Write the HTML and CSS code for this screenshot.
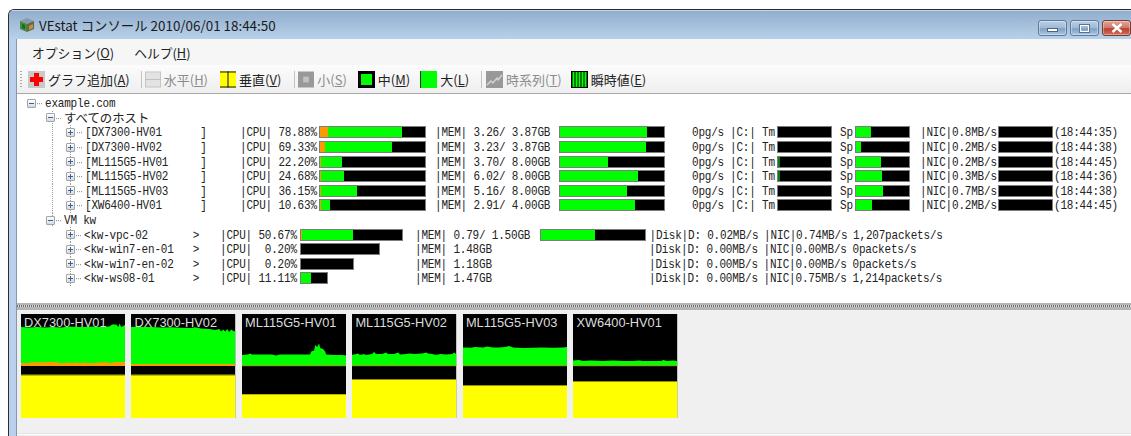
FILE: index.html
```html
<!DOCTYPE html>
<html lang="ja">
<head>
<meta charset="utf-8">
<title>VEstat コンソール</title>
<link rel="stylesheet" href="styles.css">
</head>
<body>
<div class="window">
  <header class="titlebar">
    <svg class="app-icon" viewBox="0 0 16 16" width="16" height="16">
      <polygon points="8,1 15,4 8,7 1,4" fill="#8a9aa8"/>
      <polygon points="1,4 8,7 8,15 1,12" fill="#3f8f3a"/>
      <polygon points="8,7 15,4 15,12 8,15" fill="#5a6a55"/>
      <polygon points="10,9 14,7 14,11 10,13" fill="#d98a20"/>
      <polygon points="3,7 6,8 6,12 3,11" fill="#2c5f28"/>
    </svg>
    <span class="title-text">VEstat コンソール 2010/06/01 18:44:50</span>
    <div class="caption-buttons">
      <div class="cap-btn"><span class="glyph-min"></span></div>
      <div class="cap-btn"><span class="glyph-max"></span></div>
      <div class="cap-btn cap-close">
        <svg viewBox="0 0 12 10" width="12" height="10"><path d="M1.5 1 L10.5 9 M10.5 1 L1.5 9" stroke="#fff" stroke-width="2.4" fill="none"/></svg>
      </div>
    </div>
  </header>

  <div class="client">
    <nav class="menubar">
      <span class="menu-item">オプション(<u>O</u>)</span>
      <span class="menu-item">ヘルプ(<u>H</u>)</span>
    </nav>

    <div class="toolbar">
      <span class="grip"></span>
      <span class="tool tool-add">
        <svg class="ticon" viewBox="0 0 17 17" width="17" height="17"><rect width="17" height="17" fill="#c9c9c9"/><path d="M6 2h5v4h4v5h-4v4H6v-4H2V6h4z" fill="#f00"/></svg>
        <span>グラフ追加(<u>A</u>)</span>
      </span>
      <span class="sep sep-1"></span>
      <span class="tool off tool-h">
        <svg class="ticon" viewBox="0 0 17 17" width="16" height="17"><rect x=".5" y=".5" width="16" height="16" fill="#e3e3e3" stroke="#c4c4c4"/><path d="M0 8.5h17" stroke="#bdbdbd"/></svg>
        <span>水平(<u>H</u>)</span>
      </span>
      <span class="tool tool-v">
        <svg class="ticon" viewBox="0 0 17 17" width="16" height="17"><rect width="17" height="17" fill="#ff0"/><path d="M0 .5h17M0 16.5h17M8.5 0v17" stroke="#000"/></svg>
        <span>垂直(<u>V</u>)</span>
      </span>
      <span class="sep sep-2"></span>
      <span class="tool off tool-s">
        <svg class="ticon" viewBox="0 0 17 17" width="16" height="17"><rect width="17" height="17" fill="#999"/><rect x="5.5" y="5.5" width="6" height="6" fill="#c2c2c2"/></svg>
        <span>小(<u>S</u>)</span>
      </span>
      <span class="tool tool-m">
        <svg class="ticon" viewBox="0 0 17 17" width="17" height="17"><rect width="17" height="17" fill="#000"/><rect x="3" y="3" width="11" height="11" fill="#0f0"/></svg>
        <span>中(<u>M</u>)</span>
      </span>
      <span class="tool tool-l">
        <svg class="ticon" viewBox="0 0 17 17" width="17" height="17"><rect width="17" height="17" fill="#0f0"/><path d="M.5 0v17" stroke="#333"/></svg>
        <span>大(<u>L</u>)</span>
      </span>
      <span class="sep sep-3"></span>
      <span class="tool off tool-t">
        <svg class="ticon" viewBox="0 0 17 17" width="17" height="17"><rect width="17" height="17" fill="#999"/><path d="M1 14l4-4 2 2 4-5 1 2 4-5" stroke="#d5d5d5" stroke-width="1.4" fill="none"/></svg>
        <span>時系列(<u>T</u>)</span>
      </span>
      <span class="tool tool-e">
        <svg class="ticon" viewBox="0 0 17 17" width="17" height="17"><rect width="17" height="17" fill="#000"/><path d="M2.5 1v15M5.5 1v15M8.5 1v15M11.5 1v15M14.5 1v15" stroke="#0f0" stroke-width="2"/></svg>
        <span>瞬時値(<u>E</u>)</span>
      </span>
    </div>

    <div class="tree">
      <div class="node level-0"><span class="toggle minus"></span><span class="node-text latin">example.com</span></div>
      <div class="node level-1 guide-root"><span class="toggle minus"></span><span class="node-text">すべてのホスト</span></div>

      <div class="row host guide-group guide-child">
        <span class="toggle plus"></span><span class="c name">[DX7300-HV01      ]</span>
        <span class="c h-cpu">|CPU| 78.88%</span>
        <span class="bar bar-107"><i class="warn" style="width:8px"></i><i class="fill" style="width:74px"></i></span>
        <span class="c h-mem">|MEM| 3.26/ 3.87GB</span>
        <span class="bar bar-106"><i class="fill" style="width:87px"></i></span>
        <span class="c h-pg">0pg/s</span><span class="c h-c">|C:|</span><span class="c h-tm">Tm</span>
        <span class="bar bar-55"></span>
        <span class="c h-sp">Sp</span>
        <span class="bar bar-55"><i class="fill" style="width:15px"></i></span>
        <span class="c h-nic">|NIC|0.8MB/s</span>
        <span class="bar bar-55"></span>
        <span class="c h-time">(18:44:35)</span>
      </div>
      <div class="row host guide-group guide-child">
        <span class="toggle plus"></span><span class="c name">[DX7300-HV02      ]</span>
        <span class="c h-cpu">|CPU| 69.33%</span>
        <span class="bar bar-107"><i class="warn" style="width:5px"></i><i class="fill" style="width:67px"></i></span>
        <span class="c h-mem">|MEM| 3.23/ 3.87GB</span>
        <span class="bar bar-106"><i class="fill" style="width:86px"></i></span>
        <span class="c h-pg">0pg/s</span><span class="c h-c">|C:|</span><span class="c h-tm">Tm</span>
        <span class="bar bar-55"></span>
        <span class="c h-sp">Sp</span>
        <span class="bar bar-55"><i class="fill" style="width:5px"></i></span>
        <span class="c h-nic">|NIC|0.2MB/s</span>
        <span class="bar bar-55"></span>
        <span class="c h-time">(18:44:38)</span>
      </div>
      <div class="row host guide-group guide-child">
        <span class="toggle plus"></span><span class="c name">[ML115G5-HV01     ]</span>
        <span class="c h-cpu">|CPU| 22.20%</span>
        <span class="bar bar-107"><i class="warn" style="width:1px"></i><i class="fill" style="width:21px"></i></span>
        <span class="c h-mem">|MEM| 3.70/ 8.00GB</span>
        <span class="bar bar-106"><i class="fill" style="width:48px"></i></span>
        <span class="c h-pg">0pg/s</span><span class="c h-c">|C:|</span><span class="c h-tm">Tm</span>
        <span class="bar bar-55"><i class="fill dim" style="width:2px"></i></span>
        <span class="c h-sp">Sp</span>
        <span class="bar bar-55"><i class="fill" style="width:25px"></i></span>
        <span class="c h-nic">|NIC|0.2MB/s</span>
        <span class="bar bar-55"></span>
        <span class="c h-time">(18:44:45)</span>
      </div>
      <div class="row host guide-group guide-child">
        <span class="toggle plus"></span><span class="c name">[ML115G5-HV02     ]</span>
        <span class="c h-cpu">|CPU| 24.68%</span>
        <span class="bar bar-107"><i class="warn" style="width:1px"></i><i class="fill" style="width:23px"></i></span>
        <span class="c h-mem">|MEM| 6.02/ 8.00GB</span>
        <span class="bar bar-106"><i class="fill" style="width:78px"></i></span>
        <span class="c h-pg">0pg/s</span><span class="c h-c">|C:|</span><span class="c h-tm">Tm</span>
        <span class="bar bar-55"><i class="fill dim" style="width:2px"></i></span>
        <span class="c h-sp">Sp</span>
        <span class="bar bar-55"><i class="fill" style="width:26px"></i></span>
        <span class="c h-nic">|NIC|0.3MB/s</span>
        <span class="bar bar-55"></span>
        <span class="c h-time">(18:44:36)</span>
      </div>
      <div class="row host guide-group guide-child">
        <span class="toggle plus"></span><span class="c name">[ML115G5-HV03     ]</span>
        <span class="c h-cpu">|CPU| 36.15%</span>
        <span class="bar bar-107"><i class="warn" style="width:1px"></i><i class="fill" style="width:36px"></i></span>
        <span class="c h-mem">|MEM| 5.16/ 8.00GB</span>
        <span class="bar bar-106"><i class="fill" style="width:67px"></i></span>
        <span class="c h-pg">0pg/s</span><span class="c h-c">|C:|</span><span class="c h-tm">Tm</span>
        <span class="bar bar-55"></span>
        <span class="c h-sp">Sp</span>
        <span class="bar bar-55"><i class="fill" style="width:27px"></i></span>
        <span class="c h-nic">|NIC|0.7MB/s</span>
        <span class="bar bar-55"></span>
        <span class="c h-time">(18:44:38)</span>
      </div>
      <div class="row host guide-group guide-child">
        <span class="toggle plus"></span><span class="c name">[XW6400-HV01      ]</span>
        <span class="c h-cpu">|CPU| 10.63%</span>
        <span class="bar bar-107"><i class="warn" style="width:1px"></i><i class="fill" style="width:9px"></i></span>
        <span class="c h-mem">|MEM| 2.91/ 4.00GB</span>
        <span class="bar bar-106"><i class="fill" style="width:75px"></i></span>
        <span class="c h-pg">0pg/s</span><span class="c h-c">|C:|</span><span class="c h-tm">Tm</span>
        <span class="bar bar-55"></span>
        <span class="c h-sp">Sp</span>
        <span class="bar bar-55"><i class="fill" style="width:16px"></i></span>
        <span class="c h-nic">|NIC|0.2MB/s</span>
        <span class="bar bar-55"></span>
        <span class="c h-time">(18:44:45)</span>
      </div>

      <div class="node level-1 guide-end"><span class="toggle minus"></span><span class="node-text vm-text">VM kw</span></div>

      <div class="row vm guide-child">
        <span class="toggle plus"></span><span class="c name">&lt;kw-vpc-02       &gt;</span>
        <span class="c v-cpu">|CPU| 50.67%</span>
        <span class="slot"><span class="bar" style="width:103px"><i class="warn" style="width:1px"></i><i class="fill" style="width:51px"></i></span></span>
        <span class="c v-mem">|MEM| 0.79/ 1.50GB</span>
        <span class="bar bar-106"><i class="fill" style="width:54px"></i></span>
        <span class="c v-disk">|Disk|D: 0.02MB/s</span>
        <span class="c v-nic">|NIC|0.74MB/s</span>
        <span class="c">1,207packets/s</span>
      </div>
      <div class="row vm guide-child">
        <span class="toggle plus"></span><span class="c name">&lt;kw-win7-en-01   &gt;</span>
        <span class="c v-cpu">|CPU|  0.20%</span>
        <span class="slot"><span class="bar" style="width:80px"></span></span>
        <span class="c v-mem v-mem-plain">|MEM| 1.48GB</span>
        <span class="c v-disk">|Disk|D: 0.00MB/s</span>
        <span class="c v-nic">|NIC|0.00MB/s</span>
        <span class="c">0packets/s</span>
      </div>
      <div class="row vm guide-child">
        <span class="toggle plus"></span><span class="c name">&lt;kw-win7-en-02   &gt;</span>
        <span class="c v-cpu">|CPU|  0.20%</span>
        <span class="slot"><span class="bar" style="width:54px"></span></span>
        <span class="c v-mem v-mem-plain">|MEM| 1.18GB</span>
        <span class="c v-disk">|Disk|D: 0.00MB/s</span>
        <span class="c v-nic">|NIC|0.00MB/s</span>
        <span class="c">0packets/s</span>
      </div>
      <div class="row vm guide-child">
        <span class="toggle plus"></span><span class="c name">&lt;kw-ws08-01      &gt;</span>
        <span class="c v-cpu">|CPU| 11.11%</span>
        <span class="slot"><span class="bar" style="width:28px"><i class="fill" style="width:10px"></i></span></span>
        <span class="c v-mem v-mem-plain">|MEM| 1.47GB</span>
        <span class="c v-disk">|Disk|D: 0.00MB/s</span>
        <span class="c v-nic">|NIC|0.75MB/s</span>
        <span class="c">1,214packets/s</span>
      </div>
    </div>

    <div class="splitter"></div>

    <div class="panel">
      <figure class="thumb">
        <svg viewBox="0 0 104 104" preserveAspectRatio="none">
          <rect width="104" height="104" fill="#000"/>
          <polygon fill="#0f0" points="0,13 8,13.6 16,13 24,13.4 32,13 40,13.5 48,12.6 56,13 64,13 72,12.6 80,13 88,12.4 91,10.5 95,10.5 97,13 98.500,9.500 100,13 104,11 104,50 0,50"/>
          <polygon fill="#f90" points="0,49 9,49 10,48 14,48.500 18,48 22,48.500 26,48 36,48 38,49 46,49 47,48 50,49 54,49 55,48 58,49 62,49 63,48 66,49 76,49 77,48 80,48.500 84,48 88,49 92,48.500 96,48 104,48 104,52 0,52"/>
          <rect y="60.700" width="104" height="43.300" fill="#ff0"/>
          <rect y="60.700" width="104" height=".8" fill="#777700"/>
        </svg>
        <figcaption>DX7300-HV01</figcaption>
      </figure>
      <figure class="thumb">
        <svg viewBox="0 0 104 104" preserveAspectRatio="none">
          <rect width="104" height="104" fill="#000"/>
          <polygon fill="#0f0" points="0,13 20,13 30,13.6 40,13.2 50,13.8 60,14 64,13.2 70,14.5 78,15 84,16 88,15 90,17.500 92,15.500 94,17.500 96,15 98,18 100,15.500 103,17.500 104,16.500 104,51 0,51"/>
          <rect y="50" width="104" height="2" fill="#f90"/>
          <rect y="60.700" width="104" height="43.300" fill="#ff0"/>
          <rect y="60.700" width="104" height=".8" fill="#777700"/>
        </svg>
        <figcaption>DX7300-HV02</figcaption>
      </figure>
      <figure class="thumb">
        <svg viewBox="0 0 104 104" preserveAspectRatio="none">
          <rect width="104" height="104" fill="#000"/>
          <polygon fill="#0f0" points="0,41 6,40.500 8,39.500 10,40.500 30,40.500 34,41.500 38,40.500 68,40.500 69,37.500 72,36.500 73,31 75,33 77,29.500 78,34 81,35 83,37.500 84,40.500 92,41 100,41 104,41.500 104,52 0,52"/>
          <rect y="51.400" width="104" height=".8" fill="#c98000"/>
          <rect y="80.300" width="104" height="23.700" fill="#ff0"/>
        </svg>
        <figcaption>ML115G5-HV01</figcaption>
      </figure>
      <figure class="thumb">
        <svg viewBox="0 0 104 104" preserveAspectRatio="none">
          <rect width="104" height="104" fill="#000"/>
          <polygon fill="#0f0" points="0,41 4,40 6,39.500 8,41 12,40 14,41 20,40 22,38 24,40 30,40 34,38.500 36,40 42,40 46,38.500 48,40.500 54,40 58,39.500 62,40 70,39.500 74,38.500 76,39.500 80,40 84,41 88,40 94,40.500 100,40 102,38.500 104,40 104,52 0,52"/>
          <rect y="51.400" width="104" height=".8" fill="#c98000"/>
          <rect y="65" width="104" height="39" fill="#ff0"/>
          <rect y="65" width="104" height=".8" fill="#777700"/>
        </svg>
        <figcaption>ML115G5-HV02</figcaption>
      </figure>
      <figure class="thumb">
        <svg viewBox="0 0 104 104" preserveAspectRatio="none">
          <rect width="104" height="104" fill="#000"/>
          <polygon fill="#0f0" points="0,33.500 8,33.800 12,33 20,33.500 24,32.500 30,33.500 36,33.500 42,33 46,32 50,33.500 60,34 70,33.800 78,33.500 90,33.800 100,33.500 104,33 104,52 0,52"/>
          <rect y="51.400" width="104" height=".8" fill="#c98000"/>
          <rect y="71" width="104" height="33" fill="#ff0"/>
          <rect y="71" width="104" height=".8" fill="#777700"/>
        </svg>
        <figcaption>ML115G5-HV03</figcaption>
      </figure>
      <figure class="thumb">
        <svg viewBox="0 0 104 104" preserveAspectRatio="none">
          <rect width="104" height="104" fill="#000"/>
          <polygon fill="#0f0" points="0,46.500 6,46 10,47 18,46.500 30,47 40,46.500 50,47 60,47 66,46.500 70,47 88,47 90,46 94,47 100,46.500 104,47 104,52 0,52"/>
          <rect y="51.400" width="104" height=".8" fill="#c98000"/>
          <rect y="67" width="104" height="37" fill="#ff0"/>
          <rect y="67" width="104" height=".8" fill="#777700"/>
        </svg>
        <figcaption>XW6400-HV01</figcaption>
      </figure>
    </div>
    <div class="panel-foot"></div>
  </div>
</div>
</body>
</html>
```

FILE: styles.css
```css
* { box-sizing: border-box; }

html, body {
  margin: 0;
  height: 100%;
  overflow: hidden;
  background: #fff;
}

body {
  padding: 9px 0 0 8px;
  font-family: "Noto Sans CJK JP", "Noto Sans", sans-serif;
  color: #222;
}

/* Window frame */
.window {
  width: 1123px;
  height: 427px;
  border-top: 1px solid #2b2f33;
  border-left: 1px solid #2b2f33;
  border-radius: 6px 0 0 0;
  background: #b9d1ea;
  overflow: hidden;
}

.titlebar {
  display: flex;
  align-items: center;
  height: 29px;
  padding-left: 10px;
  background: linear-gradient(#92aecd, #b8d1ea);
  border-top: 1px solid #c6d5e6;
}

.app-icon { flex: none; }

.title-text {
  margin-left: 4px;
  font-size: 13.400px;
  color: #1a1a1a;
}

.caption-buttons {
  display: flex;
  gap: 3px;
  margin-left: auto;
  align-self: flex-start;
  margin-top: 9px;
}

.cap-btn {
  display: flex;
  align-items: center;
  justify-content: center;
  width: 29px;
  height: 16px;
  border: 1px solid #5f7a98;
  border-radius: 3px;
  background: linear-gradient(#bcd0e6 0%, #9db8d6 50%, #7f9fc2 55%, #abc6e2 100%);
  box-shadow: inset 0 0 0 1px rgba(255, 255, 255, .35);
}

.cap-close {
  border-color: #7a3a30;
  background: linear-gradient(#e0a79c 0%, #cf7767 48%, #b8402f 55%, #d0705c 100%);
}

.glyph-min {
  width: 11px;
  height: 4px;
  margin-top: 4px;
  border: 1px solid #4d647e;
  background: #fff;
}

.glyph-max {
  width: 11px;
  height: 9px;
  border: 2px solid #fff;
  outline: 1px solid #5a7391;
  outline-offset: -1px;
}

/* Client area */
.client {
  margin-left: 7px;
  height: 397px;
  border-left: 1px solid #8598ad;
  background: #f0f0f0;
}

.menubar {
  display: flex;
  gap: 20px;
  align-items: center;
  height: 26px;
  padding-left: 15px;
  background: #f6f6f6;
  font-size: 12.800px;
}

.toolbar {
  display: flex;
  align-items: center;
  height: 29px;
  padding-left: 3px;
  border-bottom: 1px solid #a9a9a9;
  background: linear-gradient(#fcfcfc, #eeeeee);
  font-size: 13px;
  white-space: nowrap;
}

.grip {
  width: 2px;
  height: 16px;
  background: repeating-linear-gradient(#aaa 0 1px, transparent 1px 3px);
}

.tool {
  display: flex;
  align-items: center;
  gap: 3px;
}

.ticon { flex: none; }

.off { color: #8c8c8c; }

.sep {
  width: 1px;
  height: 17px;
  background: #c2c2c2;
}

.tool-add { margin-left: 6px; }
.sep-1 { margin-left: 11px; }
.tool-h { margin-left: 3px; }
.tool-v { margin-left: 12px; }
.sep-2 { margin-left: 13px; }
.tool-s { margin-left: 3px; }
.tool-m { margin-left: 11px; }
.tool-l { margin-left: 10px; }
.sep-3 { margin-left: 12px; }
.tool-t { margin-left: 4px; }
.tool-e { margin-left: 9px; }

/* Host tree */
.tree {
  height: 209px;
  padding-top: 2px;
  background: #fff;
  overflow: hidden;
}

.node,
.row {
  display: flex;
  align-items: center;
  height: 14.6px;
  white-space: pre;
}

.level-0 { padding-left: 10px; }
.level-1 { padding-left: 29px; }
.row { padding-left: 49px; }

.guide-root,
.guide-end,
.guide-child {
  background-repeat: repeat-y;
  background-size: 1px 2px;
  background-image: linear-gradient(#9a9a9a 50%, transparent 50%);
}

.guide-root,
.guide-end { background-position: 34.500px 0; }

.guide-child { background-position: 53px 0; }

.guide-group {
  background-image:
    linear-gradient(#9a9a9a 50%, transparent 50%),
    linear-gradient(#9a9a9a 50%, transparent 50%);
  background-position: 34.500px 0, 53px 0;
  background-size: 1px 2px, 1px 2px;
}

.toggle {
  position: relative;
  flex: none;
  width: 9px;
  height: 9px;
  border: 1px solid #a4a4a4;
  border-radius: 1px;
  background: linear-gradient(#fff, #d6dbe2);
}

.toggle::before {
  content: "";
  position: absolute;
  left: 1px;
  top: 3px;
  width: 5px;
  height: 1px;
  background: #3b5f93;
}

.plus::after {
  content: "";
  position: absolute;
  left: 3px;
  top: 1px;
  width: 1px;
  height: 5px;
  background: #3b5f93;
}

/* Dotted stub from an expander to its label */
.node-text,
.name { position: relative; }

.node-text::before,
.name::before {
  content: "";
  position: absolute;
  left: -8px;
  top: 7px;
  width: 5px;
  border-top: 1px dotted #9a9a9a;
}

.node-text {
  margin-left: 9px;
  font-size: 12.400px;
  line-height: 14px;
}

.latin,
.vm-text,
.c {
  font-family: "Liberation Mono", "DejaVu Sans Mono", monospace;
  font-size: 11px;
  letter-spacing: -0.2px;
  line-height: 14px;
  transform: scaleY(1.2);
}

.c { flex: none; }

.name { margin-left: 10px; width: 155px; }
.vm .name { margin-left: 9px; width: 136px; }

.h-cpu { width: 79px; }
.h-mem { margin-left: 9px; width: 124px; }
.h-pg { margin-left: 27px; width: 38px; }
.h-c { width: 32px; }
.h-tm { width: 15px; }
.h-sp { margin-left: 8px; width: 15px; }
.h-nic { margin-left: 10px; width: 78px; }
.h-time { margin-left: 1px; }

.v-cpu { width: 80px; }
.slot { flex: none; display: flex; width: 115px; }
.v-mem { width: 124.600px; }
.v-mem-plain { width: 230px; }
.v-disk { margin-left: 4px; width: 114.500px; }
.v-nic { width: 89px; }

.bar {
  flex: none;
  display: flex;
  height: 12px;
  border: 1px solid #7d7d7d;
  background: #000;
}

.bar-107 { width: 107px; }
.bar-106 { width: 106px; }
.bar-55 { width: 55px; }

.fill { display: block; background: #0f0; }
.dim { background: #0a7a0a; }
.warn { display: block; background: #f90; }

/* Splitter between the tree and the graphs */
.splitter {
  height: 7px;
  background:
    repeating-linear-gradient(90deg, #6f6f6f 0 1px, #d8d8d8 1px 2px) 0 2px / 100% 2px no-repeat,
    #b4b4b4;
}

/* Graph thumbnails */
.panel {
  display: flex;
  gap: 6.300px;
  height: 122.700px;
  padding: 4px 0 0 4px;
  background: #f0f0f0;
}

.thumb {
  position: relative;
  flex: none;
  width: 104.200px;
  height: 104px;
  margin: 0;
}

.thumb svg {
  display: block;
  width: 100%;
  height: 100%;
}

.thumb figcaption {
  position: absolute;
  left: 3px;
  top: 0;
  font-family: "Liberation Sans", Arial, sans-serif;
  font-size: 12.800px;
  line-height: 17px;
  color: #dcdcdc;
  white-space: nowrap;
}

.panel-foot {
  height: 2px;
  background: #fafafa;
  border-top: 1px solid #e4e4e4;
}
```
